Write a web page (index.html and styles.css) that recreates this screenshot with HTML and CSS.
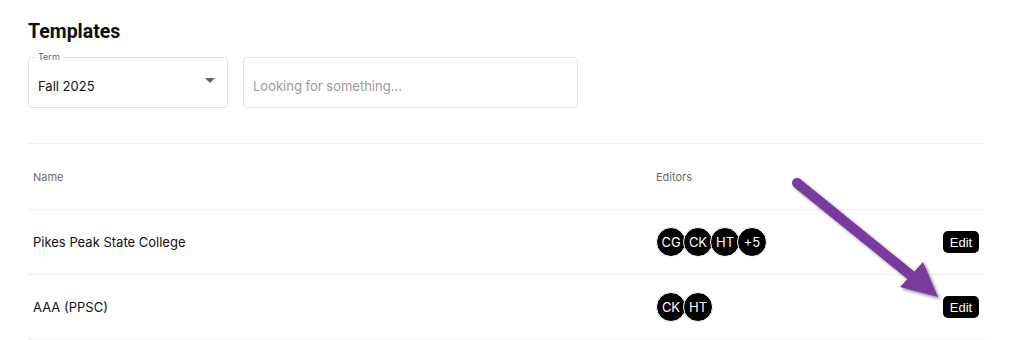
FILE: index.html
```html
<!DOCTYPE html>
<html>
<head>
<meta charset="utf-8">
<link rel="stylesheet" href="styles.css">
</head>
<body>
<div class="page">
  <h1 class="title">Templates</h1>
  <div class="filters">
    <div class="select">
      <span class="select-label">Term</span>
      <span class="select-value">Fall 2025</span>
      <span class="caret"></span>
    </div>
    <div class="search"><span class="placeholder">Looking for something...</span></div>
  </div>
  <div class="table">
    <div class="row head">
      <div class="cell">Name</div>
      <div class="cell">Editors</div>
      <div class="cell"></div>
    </div>
    <div class="row">
      <div class="cell name">Pikes Peak State College</div>
      <div class="cell avatars">
        <span class="avatar">CG</span><span class="avatar">CK</span><span class="avatar">HT</span><span class="avatar">+5</span>
      </div>
      <div class="cell"><button class="edit">Edit</button></div>
    </div>
    <div class="row">
      <div class="cell name">AAA (PPSC)</div>
      <div class="cell avatars">
        <span class="avatar">CK</span><span class="avatar">HT</span>
      </div>
      <div class="cell"><button class="edit">Edit</button></div>
    </div>
  </div>
</div>
<svg class="arrow" width="1023" height="340" viewBox="0 0 1023 340">
  <defs>
    <filter id="sh" x="-20%" y="-20%" width="140%" height="140%">
      <feGaussianBlur in="SourceAlpha" stdDeviation="1.5"/>
      <feOffset dx="1.5" dy="2" result="b"/>
      <feComponentTransfer><feFuncA type="linear" slope="0.45"/></feComponentTransfer>
      <feMerge><feMergeNode/><feMergeNode in="SourceGraphic"/></feMerge>
    </filter>
  </defs>
  <g filter="url(#sh)" fill="#7a3a9f">
    <line x1="797" y1="183" x2="913" y2="277" stroke="#7a3a9f" stroke-width="10" stroke-linecap="round"/>
    <polygon points="900,287 923,262 938,297"/>
  </g>
</svg>
</body>
</html>
```

FILE: styles.css
```css
* { box-sizing: border-box; }
body {
  margin: 0;
  background: #fff;
  font-family: Inter, "Noto Sans", sans-serif;
  color: #111;
}
.page {
  padding: 20px 38px 0 28px;
}
.title {
  margin: 0;
  font-family: Roboto, "Liberation Sans", sans-serif;
  font-size: 19.5px;
  line-height: 23px;
  font-weight: 700;
  color: #0d0d0d;
}
.filters {
  display: flex;
  gap: 15px;
  margin-top: 14px;
}
.select {
  position: relative;
  width: 200px;
  height: 51px;
  border: 1px solid #e4e4e4;
  border-radius: 4px;
  display: flex;
  align-items: center;
  padding: 6px 10px 0 9px;
}
.select-label {
  position: absolute;
  top: -7px;
  left: 6px;
  padding: 0 3px;
  background: #fff;
  font-size: 9px;
  line-height: 12px;
  color: #666;
}
.select-value {
  font-size: 13px;
  color: #111;
  flex: 1;
}
.caret {
  width: 0;
  height: 0;
  border-left: 5px solid transparent;
  border-right: 5px solid transparent;
  border-top: 5px solid #666;
  margin-right: 2px;
  margin-top: -10px;
}
.search {
  width: 335px;
  height: 51px;
  border: 1px solid #e6e6e6;
  border-radius: 4px;
  display: flex;
  align-items: center;
  padding: 6px 9px 0;
}
.placeholder {
  font-size: 13px;
  color: #9a9a9a;
}
.table {
  margin-top: 35px;
  border-top: 1px solid #f0f0f0;
}
.row {
  display: grid;
  grid-template-columns: 623px 1fr auto;
  align-items: center;
  height: 65px;
  padding: 0 6px 0 5px;
  border-bottom: 1px solid #eeeeee;
}
.row.head {
  height: 66px;
  font-size: 11px;
  color: #6b6b6b;
}
.name {
  font-size: 13px;
  color: #111;
}
.avatars {
  display: flex;
}
.avatar {
  width: 30px;
  height: 30px;
  border-radius: 50%;
  background: #000;
  color: #fff;
  border: 1px solid #fff;
  display: flex;
  align-items: center;
  justify-content: center;
  font-size: 13px;
  margin-left: -3px;
}
.avatar:first-child { margin-left: 0; }
.edit {
  width: 36px;
  height: 22px;
  background: #000;
  color: #fff;
  border: none;
  border-radius: 5px;
  font-family: "Liberation Sans", Arial, sans-serif;
  font-size: 13px;
  padding: 0;
}
.arrow {
  position: absolute;
  left: 0;
  top: 0;
  pointer-events: none;
}
```
